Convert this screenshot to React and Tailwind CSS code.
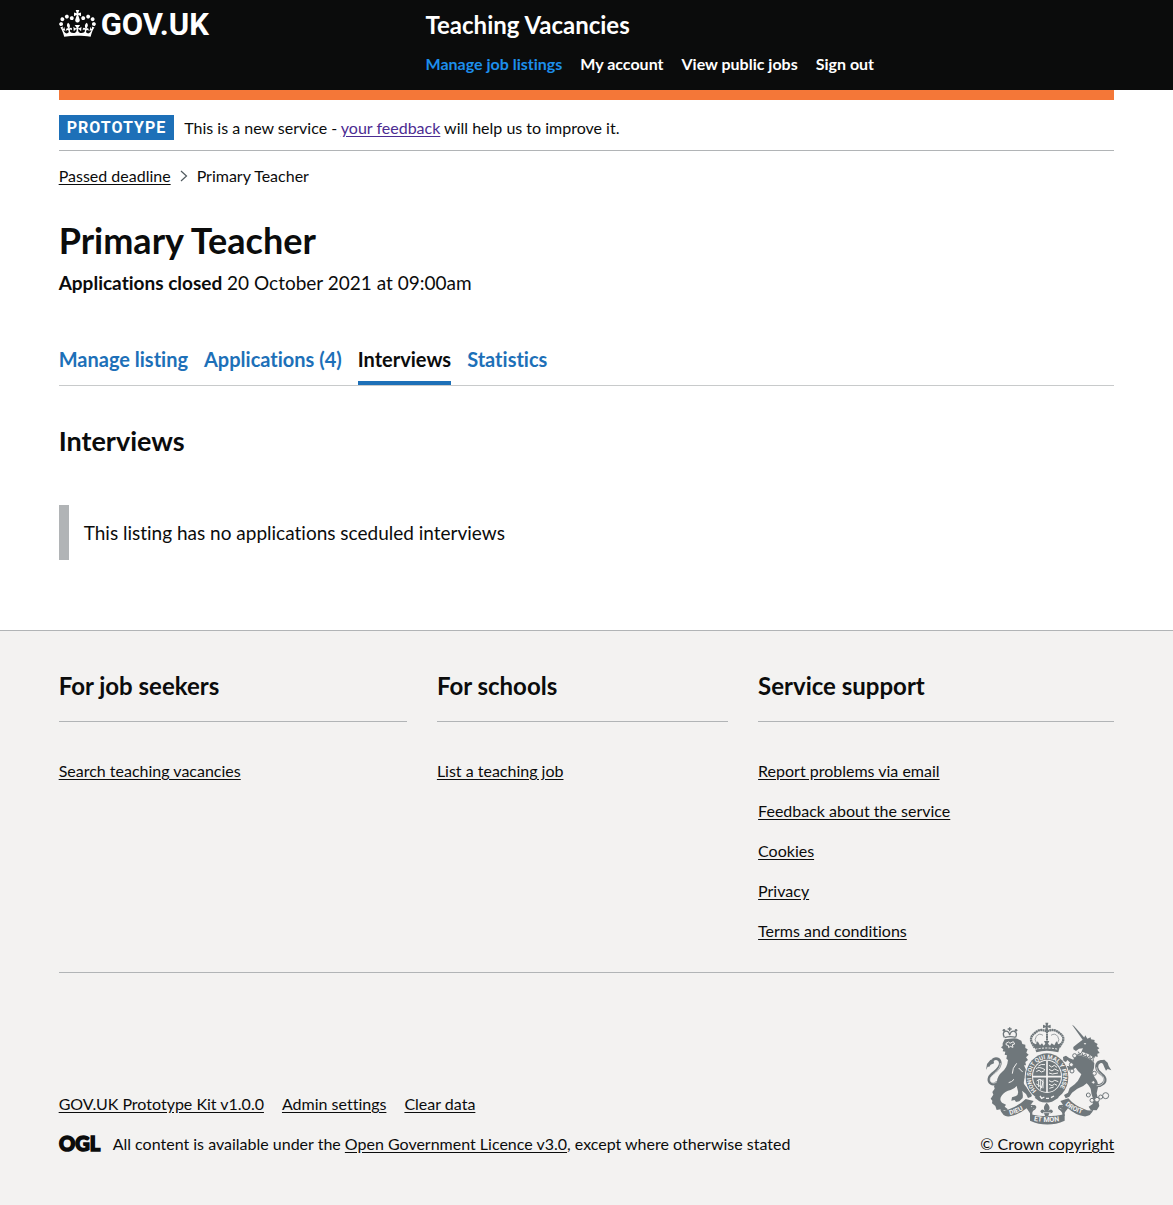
import React from "react";

const navItems = [
  { label: "Manage job listings", active: true },
  { label: "My account" },
  { label: "View public jobs" },
  { label: "Sign out" },
];

const tabs = [
  { label: "Manage listing" },
  { label: "Applications (4)" },
  { label: "Interviews", current: true },
  { label: "Statistics" },
];

const footerSections = [
  { title: "For job seekers", links: ["Search teaching vacancies"] },
  { title: "For schools", links: ["List a teaching job"] },
  {
    title: "Service support",
    links: [
      "Report problems via email",
      "Feedback about the service",
      "Cookies",
      "Privacy",
      "Terms and conditions",
    ],
  },
];

const metaLinks = ["GOV.UK Prototype Kit v1.0.0", "Admin settings", "Clear data"];

function FooterLink({ children }) {
  return (
    <a href="#" className="underline underline-offset-2">
      {children}
    </a>
  );
}

function Crown() {
  return (
    <svg viewBox="0 0 132 97" className="h-[27px] w-[37px] shrink-0" fill="currentColor" aria-hidden="true">
      <path d="M25 30.2c3.5 1.5 7.7-.2 9.1-3.7 1.5-3.6-.2-7.8-3.9-9.2-3.6-1.4-7.6.3-9.1 3.9-1.4 3.5.3 7.5 3.9 9zM9 39.5c3.6 1.5 7.8-.2 9.2-3.7 1.5-3.6-.2-7.8-3.9-9.1-3.6-1.5-7.6.2-9.1 3.8-1.4 3.5.3 7.5 3.8 9zM4.4 57.2c3.5 1.5 7.7-.2 9.1-3.8 1.5-3.6-.2-7.7-3.9-9.1-3.5-1.5-7.6.3-9.1 3.8-1.4 3.5.3 7.6 3.9 9.1zm38.3-21.4c3.5 1.5 7.7-.2 9.1-3.8 1.5-3.6-.2-7.7-3.9-9.1-3.6-1.5-7.6.3-9.1 3.8-1.3 3.6.4 7.7 3.9 9.1zm64.4-5.6c-3.6 1.5-7.8-.2-9.1-3.7-1.5-3.6.2-7.8 3.8-9.2 3.6-1.4 7.7.3 9.2 3.9 1.3 3.5-.4 7.5-3.9 9zm15.9 9.3c-3.6 1.5-7.7-.2-9.1-3.7-1.5-3.6.2-7.8 3.7-9.1 3.6-1.5 7.7.2 9.2 3.8 1.5 3.5-.3 7.5-3.8 9zm4.7 17.7c-3.6 1.5-7.8-.2-9.2-3.8-1.5-3.6.2-7.7 3.9-9.1 3.6-1.5 7.7.3 9.2 3.8 1.3 3.5-.4 7.6-3.9 9.1zM89.3 35.8c-3.6 1.5-7.8-.2-9.2-3.8-1.4-3.6.2-7.7 3.9-9.1 3.6-1.5 7.7.3 9.2 3.8 1.4 3.6-.3 7.7-3.9 9.1zM69.7 17.7l8.9 4.7V9.3l-8.9 2.8c-.2-.3-.5-.6-.9-.9L72.4 0H59.6l3.5 11.2c-.3.3-.6.5-.9.9l-8.8-2.8v13.1l8.8-4.7c.3.3.6.7.9.9l-5 15.4v.1c-.2.8-.4 1.6-.4 2.4 0 4.1 3.1 7.5 7 8.1h.2c.3 0 .7.1 1 .1.4 0 .7 0 1-.1h.2c4-.6 7.1-4.1 7.1-8.1 0-.8-.1-1.7-.4-2.4V34l-5.1-15.4c.4-.2.7-.6 1-.9zM66 92.8c16.9 0 32.8 1.1 47.1 3.2 4-16.9 8.9-26.7 14-33.5l-9.6-3.4c1 4.9 1.1 7.2 0 10.2-1.5-1.4-3-4.3-4.2-8.7L108.6 76c2.8-2 5-3.2 7.5-3.3-4.4 9.4-10 11.9-13.6 11.2-4.3-.8-6.3-4.6-5.6-7.9 1-4.7 5.7-5.9 8-.5 4.3-8.7-3-11.4-7.6-8.8 7.1-7.2 7.9-13.5 2.1-21.1-8 6.1-8.1 12.3-4.5 20.8-4.7-5.4-12.1-2.5-9.5 6.2 3.4-5.2 7.9-2 7.2 3.1-.6 4.3-6.4 7.8-13.5 7.2-10.3-.9-10.9-8-11.2-13.8 2.5-.5 7.1 1.8 11 7.3L80.2 60c-4.1 4.4-8 5.3-12.3 5.4 1.4-4.4 8-11.6 8-11.6H55.5s6.4 7.2 7.9 11.6c-4.2-.1-8-1-12.3-5.4l1.4 16.4c3.9-5.5 8.5-7.7 10.9-7.3-.3 5.8-.9 12.8-11.1 13.8-7.2.6-12.9-2.9-13.5-7.2-.7-5 3.8-8.3 7.1-3.1 2.7-8.7-4.6-11.6-9.4-6.2 3.7-8.5 3.6-14.7-4.6-20.8-5.8 7.6-5 13.9 2.2 21.1-4.7-2.6-11.9.1-7.7 8.8 2.3-5.5 7.1-4.2 8.1.5.7 3.3-1.3 7.1-5.7 7.9-3.5.7-9-1.8-13.5-11.2 2.5.1 4.7 1.3 7.5 3.3l-4.7-15.4c-1.2 4.4-2.7 7.2-4.3 8.7-1.1-3-.9-5.3 0-10.2l-9.5 3.4c5 6.9 9.9 16.7 14 33.5 14.8-2.1 30.8-3.2 47.7-3.2z" />
    </svg>
  );
}

function OglLogo() {
  return (
    <svg viewBox="0 0 42 28" className="-my-1 h-7 w-[42px] shrink-0 overflow-visible" fill="#0b0c0c" stroke="#0b0c0c" strokeWidth="1.5" fontFamily="Lato, sans-serif" fontWeight="900" fontSize="20">
      <text x="0" y="21">OGL</text>
    </svg>
  );
}

function RoyalArms() {
  const ink = "#6f777b";
  const paper = "#f3f2f1";
  return (
    <svg viewBox="0 8 390 309" className="h-[103px] w-[130px]" fill={ink} stroke="none" aria-hidden="true">
      <defs>
        <path id="garter" d="M158 214a48 54 0 1 1 62 0" />
        <path id="scrollLeft" d="M78 287Q110 279 135 259" />
        <path id="scrollMid" d="M149 304Q189 312 233 304" />
        <path id="scrollRight" d="M243 256Q266 278 308 287" />
      </defs>

      {/* lion */}
      <g fill="none" stroke={ink} strokeWidth="4">
        <path d="M61 54Q54 40 63 36 74 33 77 47 81 33 91 36 101 40 95 54" />
        <path d="M62 55Q78 49 95 54M77 24v12M71 29h12" />
      </g>
      <circle cx="60" cy="33" r="4" />
      <circle cx="96" cy="33" r="4" />
      <path d="M62 60L56 72 56 80 51 84 58 90 56 96 64 97 62 106 69 108 67 118 72 122Q70 145 54 158 40 170 39 186L30 200 32 208 25 218 28 226 20 238 25 244 24 252 34 260 38 272 50 270 54 278 60 272 72 276 70 268 62 262 66 256 54 250Q44 240 54 228 62 216 80 212 92 208 98 200L102 216Q104 226 96 230L84 234 82 244 92 242 96 248 106 246 116 236Q118 225 114 214L126 224 132 236 142 232 146 220 132 210 120 194Q118 182 124 172L130 178 142 176 140 166 128 156 120 138 126 138 124 128 132 122 126 114 134 106 127 100 131 90 124 86 124 76 115 74 112 64 100 58 92 57z" />
      <path d="M66 72l8-4 4 4 10-5 4 7-7 2 2 8-8-3-5 4-1-7-6-1zM98 132l-10 15-3 16M104 146l12 12M74 190q10-2 16-10" fill="none" stroke={paper} strokeWidth="3" />
      <path d="M40 188C26 202 10 190 16 174 22 160 50 152 49 131 48 118 35 114 26 122" fill="none" stroke={ink} strokeWidth="8" />
      <path d="M38 188C28 195 16 189 19 177 26 162 50 153 49 131" fill="none" stroke={paper} strokeWidth="2" />
      <path d="M6 152L9 134 19 122 35 116 29 124 30 132 20 136 16 142 11 142z" />

      {/* unicorn */}
      <path d="M264 16l6 4 34 38-7 5z" />
      <path d="M298 60L304 48 310 58 320 54 321 60 332 62 331 68 341 74 338 80 346 87 340 91 347 101 340 103 341 113 333 111 331 117Q313 101 292 97L297 87 285 88 276 95 268 90 268 83 280 73z" />
      <path d="M299 71l8 1-4 4z" fill={paper} />
      <path d="M283 97l4 8 6-6 5 11 7-7 4 12 8-7 2 12 8-6 1 11M280 105q30 4 50 24" fill="none" stroke={ink} strokeWidth="3" />
      <path d="M280 107L271 112 268 121Q256 118 246 109L237 113 238 125 246 128 250 122Q258 131 267 135L256 141 246 139 241 148 249 157 257 151Q268 151 275 145 282 157 292 165L288 173Q284 184 272 195L257 206 252 220 240 227 245 237 256 232 264 220 280 208Q298 203 308 192 322 204 322 222L328 242 326 254 314 262 320 272 338 273 346 260 342 240 338 222 342 204Q344 188 333 176L325 160 330 146 331 131Q310 110 280 107z" />
      <path d="M336 199C355 200 367 188 362 175 358 163 340 162 338 144 337 127 354 121 363 132" fill="none" stroke={ink} strokeWidth="9" />
      <path d="M338 199C355 199 363 188 359 176 355 164 339 162 338 144" fill="none" stroke={paper} strokeWidth="2" />
      <path d="M348 123L361 121 371 130 374 140 382 153 371 149 366 154 361 144 357 134z" />
      <g fill={paper} stroke={ink} strokeWidth="3">
        <circle cx="262" cy="136" r="6" />
        <circle cx="264" cy="155" r="6" />
        <circle cx="272" cy="109" r="6" />
        <circle cx="331" cy="162" r="6" />
        <circle cx="328" cy="189" r="5" />
        <circle cx="313" cy="227" r="6" />
        <circle cx="324" cy="243" r="6" />
        <circle cx="339" cy="241" r="7" />
        <circle cx="350" cy="233" r="6" />
        <circle cx="365" cy="229" r="9" />
      </g>

      <g transform="translate(-27 -30)">
        {/* motto scroll */}
        <path d="M75 300q12 8 27 0 31-12 50-31l24 6-9 11 12 12-12 17-12-18q-22 18-50 24-20 5-30-21z" />
        <path d="M356 300q-12 7-27 0-31-11-49-33l-24 8 8 11-12 12 13 17 14-18q22 20 48 24 20 2 29-21z" />
        <path d="M168 288q14 0 13 8-2 6-12 6M264 288q-14 0-13 8 2 6 12 6" fill={paper} stroke={ink} strokeWidth="4" />
        <path d="M165 315q51 12 104 0v19q-52 23-104 0z" />
        <path d="M165 306q0-16 15-19l5 7-13 6v20h-7zM269 306q0-16-15-19l-5 7 13 6v20h7z" />
        <path d="M215 280q15 14 5 25 9-10 14 1-2 8-11 5l-3 9h-10l-3-9q-9 3-11-5 5-11 14-1-9-11 5-25z" />
        <path d="M204 310h23" stroke={paper} strokeWidth="2" />

        {/* garter and shield */}
        <ellipse cx="216" cy="203" rx="67" ry="73" fill={paper} />
        <ellipse cx="216" cy="203" rx="64" ry="71" />
        <ellipse cx="216" cy="201" rx="45" ry="50" fill={paper} />
        <ellipse cx="216" cy="201" rx="42" ry="47" />
        <path d="M174 202h84M216 154v94" stroke={paper} strokeWidth="5" />
        <path d="M183 178q9-8 27 3M184 187l8-4 7 5 10-4M190 170q8-7 20-4M222 168l8 5 8-5 8 6M222 180l9 5 8-6 12 6M222 191l10 3 17-3M222 214l9 4 8-5 11 4M222 225l9 4 8-5 7 4M223 237l13-4M185 215q12-11 19 4l-5 17M191 211v22M197 210v31M204 210v27M184 224l17 10" fill="none" stroke={paper} strokeWidth="3" />
        <path d="M190 256q26 16 53 0l8 9-20 12q-22 6-38-1l-14-11z" />
        <path d="M195 260l5 7 8-4M213 267h9M228 265l9-5" stroke={paper} strokeWidth="4" fill="none" />

        {/* crown */}
        <path d="M211 40h9l-2 9 9-3v11l-9-3 2 12h-10l2-12-8 3V46l9 3z" />
        <path d="M215 66Q194 56 180 71 162 83 171 101L179 115M216 66Q238 56 253 71 272 83 261 101L252 115" fill="none" stroke={ink} strokeWidth="7" strokeDasharray="6 1" />
        <path d="M204 78q-12-8-20 3-8 10 1 21M228 78q12-8 20 3 8 10-1 21" fill="none" stroke={ink} strokeWidth="2" />
        <path d="M216 66v36" fill="none" stroke={ink} strokeWidth="6" strokeDasharray="6 1" />
        <path d="M178 113l-5-13 10 5 5-9 7 12 6-6 5 7 5-6-4-8h16l-4 8 6 6 5-7 8 6 6-12 6 9 9-5-5 14-4 15q-36-9-66 0z" />
        <path d="M181 120q34-8 69 0" fill="none" stroke={paper} strokeWidth="3" strokeDasharray="6 4" />
      </g>

      <g fill={paper} fontFamily="Roboto, sans-serif" fontWeight="700">
        <text fontSize="18"><textPath href="#garter">HONI SOIT QUI MAL Y PENSE</textPath></text>
        <text fontSize="20"><textPath href="#scrollLeft">DIEU</textPath></text>
        <text fontSize="21"><textPath href="#scrollMid">ET MON</textPath></text>
        <text fontSize="20"><textPath href="#scrollRight">DROIT</textPath></text>
      </g>
    </svg>
  );
}

export default function App() {
  return (
    <div className="min-h-screen bg-[#f3f2f1] font-[Lato,sans-serif] text-base leading-5 text-[#0b0c0c] [font-variant-ligatures:none]">
      <header className="bg-[#0b0c0c] text-white">
        <div className="mx-auto flex w-[90%] pt-[10px] pb-4">
          <div className="w-1/3">
            <a href="#" className="flex w-fit items-start gap-[5px]">
              <Crown />
              <span className="font-[Roboto,sans-serif] text-[31px] leading-[30px] font-bold">GOV.UK</span>
            </a>
          </div>
          <div className="flex-1 pl-[15px]">
            <a href="#" className="block w-fit text-2xl leading-[30px] font-bold">
              Teaching Vacancies
            </a>
            <nav aria-label="Main" className="mt-[14px]">
              <ul className="flex flex-wrap gap-x-[18px]">
                {navItems.map((item) => (
                  <li key={item.label}>
                    <a href="#" className={item.active ? "font-bold text-[#1d8feb]" : "font-bold"}>
                      {item.label}
                    </a>
                  </li>
                ))}
              </ul>
            </nav>
          </div>
        </div>
      </header>

      <div className="bg-white pb-[70px]">
        <div className="mx-auto w-[90%]">
          <div className="h-[10px] bg-[#f47738]" />
          <div className="flex items-center gap-[10px] border-b border-[#b1b4b6] pt-[15px] pb-[10px]">
            <strong className="bg-[#1d70b8] px-2 font-[Roboto,sans-serif] leading-[25px] font-bold tracking-[1px] text-white">
              PROTOTYPE
            </strong>
            <span>
              This is a new service -{" "}
              <a href="#" className="text-[#4c2c92] underline underline-offset-2">
                your feedback
              </a>{" "}
              will help us to improve it.
            </span>
          </div>
          <nav aria-label="Breadcrumb" className="mt-[15px]">
            <ol className="flex items-center gap-[9px]">
              <li>
                <a href="#" className="underline underline-offset-2">
                  Passed deadline
                </a>
              </li>
              <li aria-hidden="true">
                <svg viewBox="0 0 8 12" className="h-3 w-2" fill="none" stroke="#505a5f" strokeWidth="1.2">
                  <path d="M1 1l5.5 5L1 11" />
                </svg>
              </li>
              <li>Primary Teacher</li>
            </ol>
          </nav>

          <main>
            <h1 className="mt-[34px] text-4xl leading-10 font-bold">Primary Teacher</h1>
            <p className="mt-[10px] text-[19px] leading-[25px]">
              <strong className="font-bold">Applications closed</strong> 20 October 2021 at 09:00am
            </p>

            <nav aria-label="Listing" className="mt-[52px] border-b border-[#c8cacb]">
              <ul className="flex flex-wrap gap-x-4 text-[20px] leading-[25px] font-bold">
                {tabs.map((tab) => (
                  <li key={tab.label}>
                    <a
                      href="#"
                      aria-current={tab.current ? "page" : undefined}
                      className={
                        tab.current
                          ? "block border-b-4 border-[#1d70b8] pb-[9px]"
                          : "block border-b-4 border-transparent pb-[9px] text-[#1d70b8]"
                      }
                    >
                      {tab.label}
                    </a>
                  </li>
                ))}
              </ul>
            </nav>

            <h2 className="mt-10 text-[27px] leading-[30px] font-bold">Interviews</h2>
            <div className="mt-[49px] border-l-[10px] border-[#b1b4b6] p-[15px] text-[19px] leading-[25px]">
              This listing has no applications sceduled interviews
            </div>
          </main>
        </div>
      </div>

      <footer className="border-t border-[#b1b4b6] pt-10 pb-[50px]">
        <div className="mx-auto w-[90%]">
          <div className="grid grid-cols-[348fr_291fr_356fr] gap-[30px]">
            {footerSections.map((section) => (
              <section key={section.title}>
                <h2 className="border-b border-[#b1b4b6] pb-5 text-2xl leading-[30px] font-bold">{section.title}</h2>
                <ul className="mt-[39px] flex flex-col gap-5">
                  {section.links.map((link) => (
                    <li key={link}>
                      <FooterLink>{link}</FooterLink>
                    </li>
                  ))}
                </ul>
              </section>
            ))}
          </div>

          <div className="mt-[31px] flex items-end justify-between gap-[30px] border-t border-[#b1b4b6] pt-[49px]">
            <div>
              <ul className="flex flex-wrap gap-x-[18px]">
                {metaLinks.map((link) => (
                  <li key={link}>
                    <FooterLink>{link}</FooterLink>
                  </li>
                ))}
              </ul>
              <div className="mt-5 flex items-center gap-3">
                <OglLogo />
                <span>
                  All content is available under the <FooterLink>Open Government Licence v3.0</FooterLink>, except where
                  otherwise stated
                </span>
              </div>
            </div>
            <a href="#" className="flex flex-col items-end gap-[9px] underline underline-offset-2">
              <RoyalArms />
              <span>© Crown copyright</span>
            </a>
          </div>
        </div>
      </footer>
    </div>
  );
}
